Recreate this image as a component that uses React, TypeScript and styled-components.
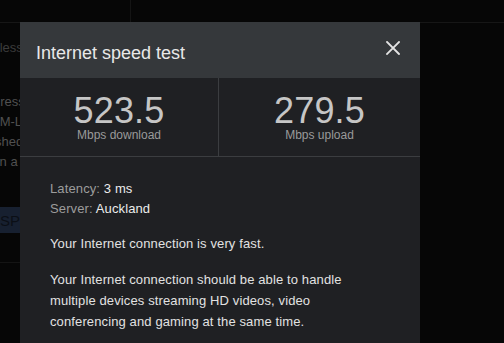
import React from "react";
import styled, { createGlobalStyle } from "styled-components";

const Global = createGlobalStyle`
  html, body { margin: 0; padding: 0; background: #060606; }
  body { font-family: "Liberation Sans", Arial, sans-serif; overflow: hidden; }
  #root { width: 504px; height: 343px; position: relative; overflow: hidden; }
`;

const Page = styled.div`
  width: 504px;
  height: 343px;
  position: relative;
  background: #060606;
`;

const TopBar = styled.div`
  height: 22px;
  border-bottom: 1px solid #161616;
  display: flex;
`;

const TopCell = styled.div<{ $w: number }>`
  width: ${(p) => p.$w}px;
  border-right: 1px solid #141414;
`;

const BgColumn = styled.div`
  display: flex;
  flex-direction: column;
  font-size: 13px;
`;

const BgLine = styled.div<{ $mt?: number; $c?: string; $x: number }>`
  line-height: 20px;
  margin-top: ${(p) => p.$mt ?? 0}px;
  margin-left: ${(p) => p.$x}px;
  color: ${(p) => p.$c ?? "#555"};
  white-space: nowrap;
`;

const BgButton = styled.div`
  margin-top: 35px;
  height: 26px;
  width: 120px;
  background: #172030;
  color: #0b0f16;
  font-size: 15px;
  line-height: 27px;
  white-space: nowrap;
`;

const BgRule = styled.div`
  margin-top: 29px;
  border-top: 1px solid #141414;
  width: 200px;
`;

const Dialog = styled.div`
  position: absolute;
  left: 20px;
  top: 22px;
  width: 400px;
  height: 340px;
  background: #1f2023;
  display: flex;
  flex-direction: column;
`;

const Header = styled.div`
  height: 56px;
  background: #35383b;
  display: flex;
  align-items: center;
  justify-content: space-between;
  padding: 6px 20px 0 16px;
  box-sizing: border-box;
`;

const Title = styled.div`
  font-size: 18px;
  color: #e8e8e8;
`;

const CloseButton = styled.div`
  width: 14px;
  height: 14px;
  margin-top: -10px;
  display: flex;
`;

const Stats = styled.div`
  display: grid;
  grid-template-columns: 199px 1fr;
  border-bottom: 1px solid #3b3d40;
  height: 79px;
  box-sizing: border-box;
`;

const Stat = styled.div<{ $divider?: boolean }>`
  display: flex;
  flex-direction: column;
  align-items: center;
  padding-top: 15px;
  border-right: ${(p) => (p.$divider ? "1px solid #3b3d40" : "none")};
`;

const Number = styled.div`
  font-size: 36px;
  line-height: 35px;
  color: #c6c6c6;
  font-weight: 400;
  letter-spacing: 0.2px;
`;

const Unit = styled.div`
  font-size: 12px;
  line-height: 14px;
  color: #9a9a9a;
`;

const Body = styled.div`
  padding: 22px 30px 0 30px;
  display: flex;
  flex-direction: column;
  font-size: 13px;
  letter-spacing: 0.12px;
`;

const InfoRow = styled.div`
  line-height: 20px;
  color: #9c9c9c;
`;

const Value = styled.span`
  color: #ececec;
`;

const Para = styled.p<{ $mt: number }>`
  margin: ${(p) => p.$mt}px 0 0 0;
  max-width: 312px;
  line-height: 21px;
  color: #e2e2e2;
`;

export default function App() {
  return (
    <>
      <Global />
      <Page>
        <TopBar>
          <TopCell $w={130} />
        </TopBar>
        <BgColumn>
          <BgLine $mt={15} $x={-27} $c="#3c3c3c">Wireless</BgLine>
          <BgLine $mt={34} $x={-23} $c="#505050">Address</BgLine>
          <BgLine $x={-9} $c="#505050">AM-LAN</BgLine>
          <BgLine $x={-26} $c="#505050">Finished</BgLine>
          <BgLine $x={-17} $c="#505050">Run a</BgLine>
          <BgButton>SPEED</BgButton>
          <BgRule />
        </BgColumn>
        <Dialog>
          <Header>
            <Title>Internet speed test</Title>
            <CloseButton>
              <svg width="14" height="14" viewBox="0 0 14 14">
                <path
                  d="M1 1 L13 13 M13 1 L1 13"
                  stroke="#e4e4e4"
                  strokeWidth="1.8"
                  strokeLinecap="square"
                  fill="none"
                />
              </svg>
            </CloseButton>
          </Header>
          <Stats>
            <Stat $divider>
              <Number>523.5</Number>
              <Unit>Mbps download</Unit>
            </Stat>
            <Stat>
              <Number>279.5</Number>
              <Unit>Mbps upload</Unit>
            </Stat>
          </Stats>
          <Body>
            <InfoRow>
              Latency: <Value>3 ms</Value>
            </InfoRow>
            <InfoRow>
              Server: <Value>Auckland</Value>
            </InfoRow>
            <Para $mt={14}>Your Internet connection is very fast.</Para>
            <Para $mt={15}>
              Your Internet connection should be able to handle multiple devices
              streaming HD videos, video conferencing and gaming at the same
              time.
            </Para>
          </Body>
        </Dialog>
      </Page>
    </>
  );
}
